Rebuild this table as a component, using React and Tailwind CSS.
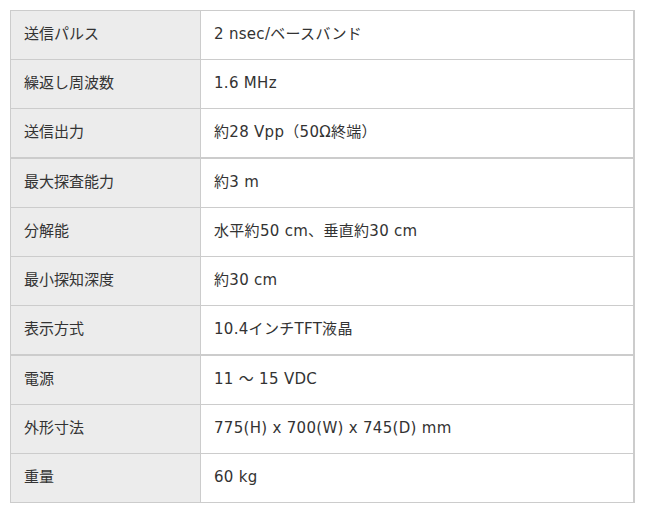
const specs = [
  { label: "送信パルス", value: "2 nsec/ベースバンド" },
  { label: "繰返し周波数", value: "1.6 MHz" },
  { label: "送信出力", value: "約28 Vpp（50Ω終端）", thick: true },
  { label: "最大探査能力", value: "約3 m" },
  { label: "分解能", value: "水平約50 cm、垂直約30 cm" },
  { label: "最小探知深度", value: "約30 cm" },
  { label: "表示方式", value: "10.4インチTFT液晶", thick: true },
  { label: "電源", value: "11 ～ 15 VDC" },
  { label: "外形寸法", value: "775(H) x 700(W) x 745(D) mm" },
  { label: "重量", value: "60 kg" },
];

export default function App() {
  return (
    <div className="bg-white w-[646px] h-[512px] pt-[10px] pl-[10px] font-['DejaVu_Sans','Noto_Sans_CJK_JP',sans-serif] text-[15px] text-[#333]">
      <div className="w-[625px] border-t border-l border-r-2 border-[#ccc]">
        {specs.map((s) => (
          <div
            key={s.label}
            className={`flex h-[49px] border-[#ccc] ${s.thick ? "border-b-2 h-[50px]" : "border-b"}`}
          >
            <div className="w-[190px] shrink-0 bg-[#ececec] border-r border-[#ccc] flex items-center pl-[13px] pb-[1px]">
              {s.label}
            </div>
            <div className="flex-1 flex items-center pl-[13px] pb-[1px] tracking-[0.3px]">{s.value}</div>
          </div>
        ))}
      </div>
    </div>
  );
}
